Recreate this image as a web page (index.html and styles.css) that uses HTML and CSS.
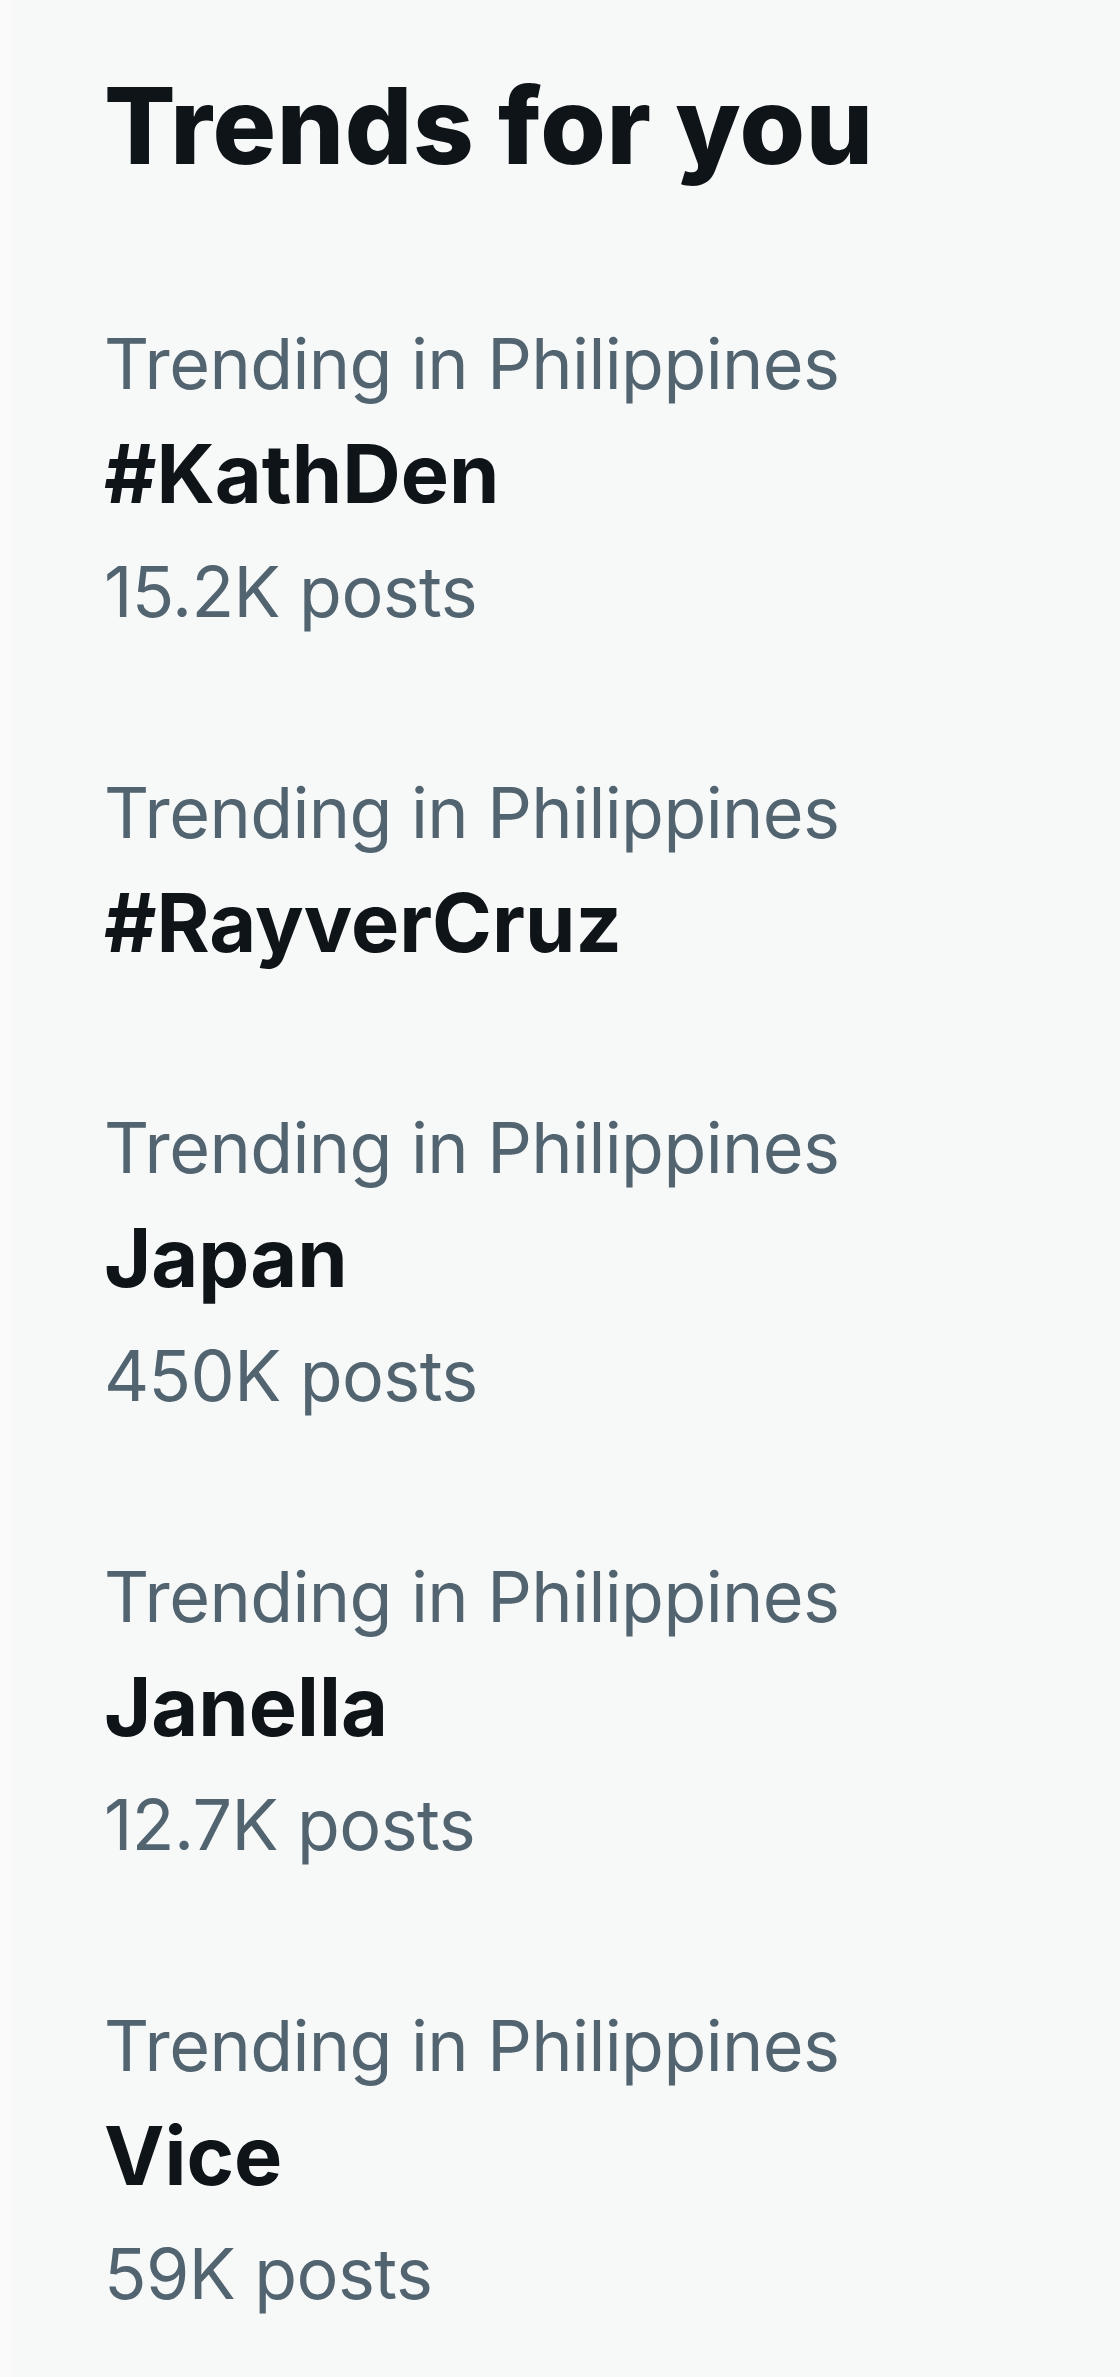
FILE: index.html
```html
<!DOCTYPE html>
<html lang="en">
<head>
<meta charset="utf-8">
<title>Trends for you</title>
<link rel="stylesheet" href="styles.css">
</head>
<body>
<div class="edge"></div>
<section class="panel">
  <h2 class="title">Trends for you</h2>
  <ul class="trends">
    <li class="trend">
      <span class="meta">Trending in Philippines</span>
      <span class="name">#KathDen</span>
      <span class="meta">15.2K posts</span>
    </li>
    <li class="trend">
      <span class="meta">Trending in Philippines</span>
      <span class="name">#RayverCruz</span>
    </li>
    <li class="trend">
      <span class="meta">Trending in Philippines</span>
      <span class="name">Japan</span>
      <span class="meta">450K posts</span>
    </li>
    <li class="trend">
      <span class="meta">Trending in Philippines</span>
      <span class="name">Janella</span>
      <span class="meta">12.7K posts</span>
    </li>
    <li class="trend">
      <span class="meta">Trending in Philippines</span>
      <span class="name">Vice</span>
      <span class="meta">59K posts</span>
    </li>
  </ul>
</section>
</body>
</html>
```
FILE: styles.css
```css
html, body {
  margin: 0;
  padding: 0;
}
body {
  background: #f7f9f9;
  font-family: Inter, "Noto Sans", sans-serif;
  color: #0f1419;
  min-height: 2377px;
  display: flex;
}
.edge {
  width: 12px;
  flex: none;
  background: #fafafa;
}
.panel {
  flex: 1;
  padding: 61px 0 0 92px;
}
.title {
  margin: 0;
  font-size: 106px;
  line-height: 130px;
  font-weight: 800;
  letter-spacing: 0.6px;
}
.trends {
  list-style: none;
  margin: 0;
  padding: 62px 0 0;
}
.trend {
  display: flex;
  flex-direction: column;
  padding: 54px 0 53px;
}
.meta {
  font-size: 70px;
  line-height: 114px;
  color: #536471;
  letter-spacing: -0.6px;
}
.name {
  font-size: 81px;
  line-height: 106px;
  margin-bottom: 8px;
  font-weight: 700;
}
```
